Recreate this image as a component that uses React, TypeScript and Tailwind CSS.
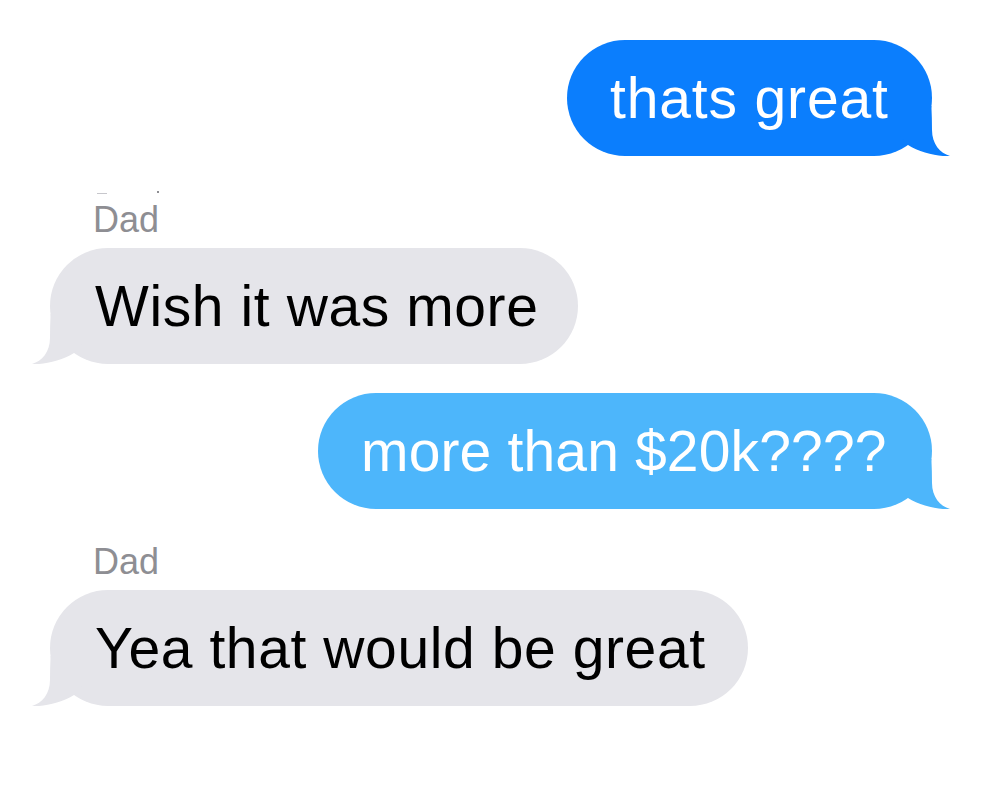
const font = { fontFamily: '"Liberation Sans", Arial, sans-serif' };

function Tail({ side, color }: { side: 'left' | 'right'; color: string }) {
  return (
    <svg
      width="50"
      height="50"
      viewBox="0 0 50 50"
      className={`absolute bottom-0 ${side === 'right' ? 'right-[-18px]' : 'left-[-18px] -scale-x-100'}`}
    >
      <path d="M0 0 H31.4 C31.8 8 32 16 32 24 C32 38 40 47 50 50 C40 51 20 47 8 39 L0 30 Z" fill={color} />
    </svg>
  );
}

function Outgoing({
  text,
  color,
  fill,
  width,
  tracking,
}: {
  text: string;
  color: string;
  fill: string;
  width: string;
  tracking: string;
}) {
  return (
    <div className="flex justify-end pr-[68px]">
      <div className={`relative flex h-[116px] items-center rounded-[58px] pl-[43px] ${width} ${color}`}>
        <Tail side="right" color={fill} />
        <span
          className={`relative whitespace-nowrap text-[57px] leading-none text-white ${tracking}`}
          style={font}
        >
          {text}
        </span>
      </div>
    </div>
  );
}

function Incoming({ text, width }: { text: string; width: string }) {
  return (
    <div className="flex pl-[50px]">
      <div className={`relative flex h-[116px] items-center rounded-[58px] bg-[#e5e5ea] pl-[45px] ${width}`}>
        <Tail side="left" color="#e5e5ea" />
        <span
          className="relative whitespace-nowrap text-[57px] leading-none tracking-[0.6px] text-black"
          style={font}
        >
          {text}
        </span>
      </div>
    </div>
  );
}

function Sender({ name }: { name: string }) {
  return (
    <div className="pl-[93px] text-[36px] leading-none text-[#8e8e93]" style={font}>
      {name}
    </div>
  );
}

export default function App() {
  return (
    <div className="h-[800px] w-[1000px] overflow-hidden bg-white pt-[40px]">
      <Outgoing
        text="thats great"
        color="bg-[#0b7efd]"
        fill="#0b7efd"
        width="w-[365px]"
        tracking="tracking-[0.85px]"
      />

      <div className="mt-[35px] flex h-[6px] items-start gap-[50px] pl-[97px]">
        <span className="mt-[2px] h-[1px] w-[10px] bg-[#c7c7cc]" />
        <span className="h-[2px] w-[2px] bg-[#8e8e93]" />
      </div>
      <div className="mt-[5px]">
        <Sender name="Dad" />
      </div>
      <div className="mt-[10px]">
        <Incoming text="Wish it was more" width="w-[528px]" />
      </div>

      <div className="mt-[29px]">
        <Outgoing
          text="more than $20k????"
          color="bg-[#4db6fb]"
          fill="#4db6fb"
          width="w-[614px]"
          tracking="tracking-[0.15px]"
        />
      </div>

      <div className="mt-[35px]">
        <Sender name="Dad" />
      </div>
      <div className="mt-[10px]">
        <Incoming text="Yea that would be great" width="w-[698px]" />
      </div>
    </div>
  );
}
